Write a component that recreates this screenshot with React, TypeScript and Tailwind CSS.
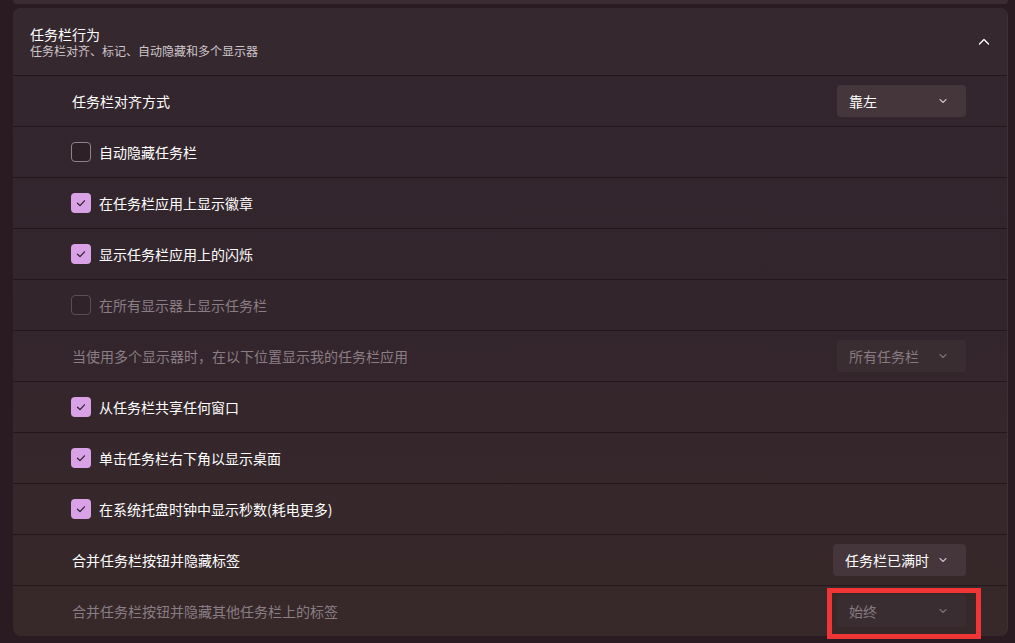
import React from "react";

type Row =
  | { kind: "check"; label: string; checked: boolean; disabled?: boolean }
  | { kind: "select"; label: string; value: string; disabled?: boolean; wide?: boolean; marked?: boolean };

const rows: Row[] = [
  { kind: "select", label: "任务栏对齐方式", value: "靠左" },
  { kind: "check", label: "自动隐藏任务栏", checked: false },
  { kind: "check", label: "在任务栏应用上显示徽章", checked: true },
  { kind: "check", label: "显示任务栏应用上的闪烁", checked: true },
  { kind: "check", label: "在所有显示器上显示任务栏", checked: false, disabled: true },
  { kind: "select", label: "当使用多个显示器时，在以下位置显示我的任务栏应用", value: "所有任务栏", disabled: true },
  { kind: "check", label: "从任务栏共享任何窗口", checked: true },
  { kind: "check", label: "单击任务栏右下角以显示桌面", checked: true },
  { kind: "check", label: "在系统托盘时钟中显示秒数(耗电更多)", checked: true },
  { kind: "select", label: "合并任务栏按钮并隐藏标签", value: "任务栏已满时", wide: true },
  { kind: "select", label: "合并任务栏按钮并隐藏其他任务栏上的标签", value: "始终", disabled: true, marked: true },
];

function ChevronDown({ dim }: { dim?: boolean }) {
  return (
    <svg width="10" height="10" viewBox="0 0 10 10" fill="none">
      <path
        d="M2 3.5L5 6.5L8 3.5"
        stroke={dim ? "#7d7176" : "#c9bfc3"}
        strokeWidth="1.1"
        strokeLinecap="round"
        strokeLinejoin="round"
      />
    </svg>
  );
}

function Checkbox({ checked, disabled }: { checked: boolean; disabled?: boolean }) {
  if (checked) {
    return (
      <div className="w-5 h-5 rounded-[4px] bg-[#d9a2e6] flex items-center justify-center shrink-0">
        <svg width="12" height="12" viewBox="0 0 12 12" fill="none">
          <path d="M2.5 6.2L5 8.6L9.5 3.8" stroke="#2a1d24" strokeWidth="1.2" strokeLinecap="round" strokeLinejoin="round" />
        </svg>
      </div>
    );
  }
  return (
    <div
      className={`w-5 h-5 rounded-[4px] border shrink-0 ${
        disabled ? "border-[#5b4d54] bg-[#30232a]" : "border-[#8e8388] bg-[#2d2027]"
      }`}
    />
  );
}

export default function App() {
  return (
    <div
      className="w-[1015px] h-[643px] overflow-hidden bg-[#2a1b22] pl-[13px] pr-[7px]"
      style={{ fontFamily: '"Noto Sans CJK SC", "Noto Sans", sans-serif' }}
    >
      <div className="h-[4px] bg-[#3a2b32] rounded-b-md" />
      <div className="mt-[4px] rounded-lg bg-gradient-to-b from-[#34262e] via-[#33252c] to-[#372929] border-r border-[#3e3035]">
        {/* header */}
        <div className="h-[67px] rounded-t-lg flex items-center justify-between pl-[17px] pr-[16px] bg-[#35282f]">
          <div className="flex flex-col">
            <span className="text-[14px] leading-[18px] text-white">任务栏行为</span>
            <span className="text-[12px] leading-[16px] text-[#cfc6ca]">任务栏对齐、标记、自动隐藏和多个显示器</span>
          </div>
          <svg width="14" height="14" viewBox="0 0 14 14" fill="none">
            <path d="M2.5 9L7 4.5L11.5 9" stroke="#ffffff" strokeWidth="1.3" strokeLinecap="round" strokeLinejoin="round" />
          </svg>
        </div>

        {rows.map((row, i) => (
          <div
            key={i}
            className="relative h-[51px] border-t border-[#23171c] flex items-center pr-[41px]"
          >
            {row.kind === "check" ? (
              <div className="flex items-center gap-2 pl-[58px]">
                <Checkbox checked={row.checked} disabled={row.disabled} />
                <span className={`text-[14px] ${row.disabled ? "text-[#8a7d84]" : "text-white"}`}>{row.label}</span>
              </div>
            ) : (
              <>
                <span className={`pl-[59px] text-[14px] flex-1 ${row.disabled ? "text-[#8a7d84]" : "text-white"}`}>
                  {row.label}
                </span>
                <div
                  className={`h-[32px] rounded-[4px] flex items-center justify-between pl-3 pr-[18px] ${
                    row.wide ? "w-[133px]" : "w-[129px]"
                  } ${row.disabled ? "bg-[#3a2d31] text-[#877b80]" : "bg-[#45363b] text-white"}`}
                >
                  <span className="text-[14px]">{row.value}</span>
                  <ChevronDown dim={row.disabled} />
                </div>
                {row.marked && (
                  <div className="absolute right-[26px] top-[2px] w-[154px] h-[51px] border-[5px] border-[#ef3535] pointer-events-none" />
                )}
              </>
            )}
          </div>
        ))}
      </div>
    </div>
  );
}
